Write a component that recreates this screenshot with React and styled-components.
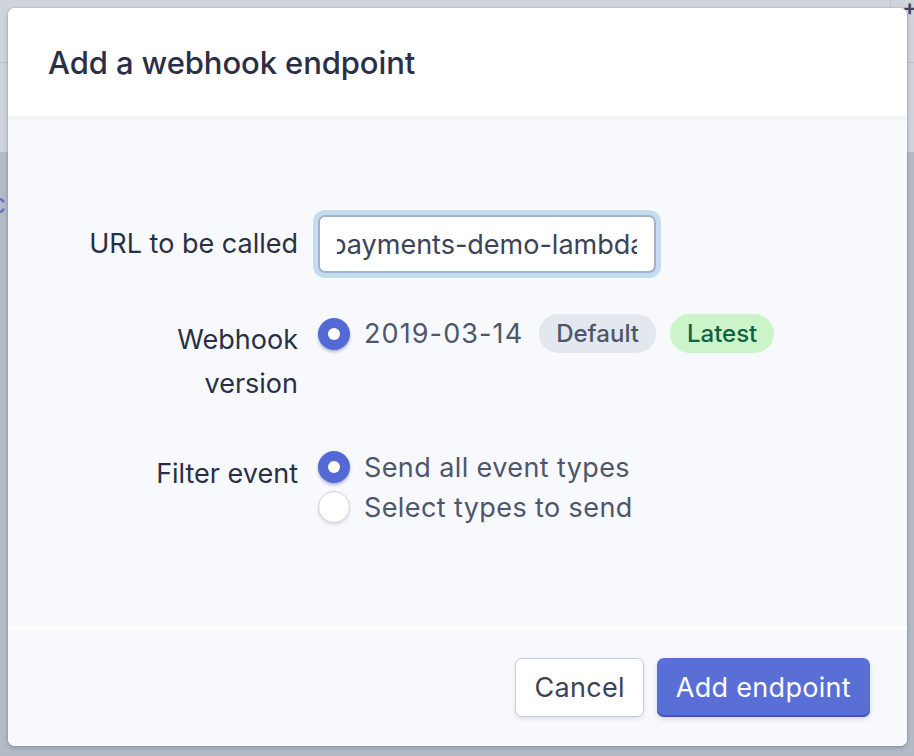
import React from "react";
import styled, { createGlobalStyle } from "styled-components";

const Global = createGlobalStyle`
  html, body { margin: 0; padding: 0; }
  body { font-family: Inter, Roboto, "Liberation Sans", Arial, sans-serif; -webkit-font-smoothing: antialiased; }
`;

const Screen = styled.div`
  position: relative;
  width: 914px;
  height: 756px;
  overflow: hidden;
  background: #b4bac6;
  display: flex;
  flex-direction: column;
`;

const TopBand = styled.div`
  height: 152px;
  background: #cfd3db;
  display: flex;
  flex-direction: column;
`;

const NavBar = styled.div`
  height: 62px;
  border-bottom: 1px solid #bec2cb;
  display: flex;
  justify-content: flex-end;
`;

const CornerButton = styled.div`
  width: 26px;
  border-left: 1px solid #bfc3cc;
  display: flex;
  justify-content: flex-end;
  color: #3f4560;
  font-size: 22px;
  font-weight: 600;
  line-height: 14px;
  margin-right: -3px;
`;

const LowerArea = styled.div`
  flex: 1;
  padding-top: 36px;
`;

const PeekLink = styled.div`
  color: #5f6fcb;
  font-size: 26px;
  text-indent: -9px;
`;

const Modal = styled.div`
  position: absolute;
  top: 8px;
  left: 8px;
  width: 899px;
  height: 738px;
  border-radius: 7px;
  overflow: hidden;
  display: flex;
  flex-direction: column;
  background: #f7f9fc;
  box-shadow: 0 2px 4px rgba(40, 48, 70, 0.25), 0 0 0 1px rgba(60, 66, 87, 0.08);
`;

const Header = styled.div`
  height: 108px;
  flex: none;
  background: #ffffff;
  display: flex;
  align-items: center;
  padding: 0 40px;
  box-sizing: border-box;
  position: relative;
  z-index: 1;
  box-shadow: 0 2px 6px rgba(60, 66, 87, 0.05);
`;

const Title = styled.h1`
  margin: 0;
  font-size: 31px;
  font-weight: 500;
  color: #2a2f45;
  letter-spacing: -0.1px;
`;

const Body = styled.div`
  flex: 1;
  background: #f7f9fc;
  padding: 99px 0 0 78px;
  display: flex;
  flex-direction: column;
  gap: 41px;
`;

const Row = styled.div`
  display: grid;
  grid-template-columns: 212px auto;
  column-gap: 20px;
  align-items: ${(p) => (p.$center ? "center" : "start")};
`;

const Label = styled.div`
  text-align: right;
  font-size: 27px;
  line-height: 44px;
  color: #2a2f45;
  padding-top: ${(p) => p.$offset || 0}px;
`;

const InputRing = styled.div`
  width: 338px;
  height: 58px;
  box-sizing: border-box;
  border: 2px solid #a0b4c8;
  border-radius: 7px;
  background: #ffffff;
  box-shadow: 0 0 0 5px #c4dcee;
  padding: 0 17px 0 17px;
  display: flex;
  align-items: center;
  overflow: hidden;
`;

const InputText = styled.div`
  flex: 1;
  overflow: hidden;
  white-space: nowrap;
  font-size: 27px;
  color: #3c4257;
  text-indent: -7px;
`;

const ControlLine = styled.div`
  display: flex;
  align-items: center;
  gap: ${(p) => p.$gap || 14}px;
  height: ${(p) => p.$h || 40}px;
`;

const OptionList = styled.div`
  display: flex;
  flex-direction: column;
`;

const Radio = styled.span`
  width: 32px;
  height: 32px;
  flex: none;
  box-sizing: border-box;
  border-radius: 50%;
  display: flex;
  align-items: center;
  justify-content: center;
  background: ${(p) => (p.$on ? "#5469d4" : "#ffffff")};
  border: ${(p) => (p.$on ? "none" : "1px solid #cfd4dc")};
  box-shadow: ${(p) =>
    p.$on
      ? "0 2px 3px rgba(50, 60, 140, 0.35)"
      : "0 2px 3px rgba(60, 66, 87, 0.15)"};
  &::after {
    content: "";
    display: ${(p) => (p.$on ? "block" : "none")};
    width: 12px;
    height: 12px;
    border-radius: 50%;
    background: #ffffff;
  }
`;

const OptionText = styled.span`
  font-size: 27px;
  letter-spacing: ${(p) => (p.$date ? 1.1 : 0.4)}px;
  color: #4f566b;
  margin-right: ${(p) => (p.$date ? 2 : 0)}px;
`;

const Badge = styled.span`
  display: inline-flex;
  align-items: center;
  height: 39px;
  padding: 0 17px;
  border-radius: 20px;
  font-size: 24px;
  font-weight: 500;
  background: ${(p) => (p.$green ? "#cbf4c9" : "#e3e8ee")};
  color: ${(p) => (p.$green ? "#0e6245" : "#4f566b")};
`;

const Footer = styled.div`
  height: 120px;
  flex: none;
  box-sizing: border-box;
  border-top: 4px solid #ffffff;
  background: #f7f9fc;
  display: flex;
  justify-content: flex-end;
  align-items: flex-start;
  gap: 13px;
  padding: 28px 37px 0 0;
`;

const Button = styled.button`
  height: 59px;
  padding: 0 ${(p) => (p.$primary ? 19 : 18)}px;
  border-radius: 7px;
  font-family: inherit;
  font-size: 27px;
  letter-spacing: 0.3px;
  cursor: pointer;
  border: ${(p) => (p.$primary ? "none" : "1px solid #c7ccd4")};
  background: ${(p) => (p.$primary ? "#5a6fd6" : "#ffffff")};
  color: ${(p) => (p.$primary ? "#ffffff" : "#3c4257")};
  box-shadow: ${(p) =>
    p.$primary
      ? "inset 0 -2px 0 #4257c0, 0 2px 5px rgba(60, 66, 87, 0.18)"
      : "0 2px 4px rgba(60, 66, 87, 0.12)"};
`;

export default function App() {
  return (
    <>
      <Global />
      <Screen>
        <TopBand>
          <NavBar>
            <CornerButton>+</CornerButton>
          </NavBar>
        </TopBand>
        <LowerArea>
          <PeekLink>c</PeekLink>
        </LowerArea>
        <Modal>
          <Header>
            <Title>Add a webhook endpoint</Title>
          </Header>
          <Body>
            <Row $center>
              <Label>URL to be called</Label>
              <InputRing>
                <InputText>payments-demo-lambda-endpoint</InputText>
              </InputRing>
            </Row>
            <Row>
              <Label $offset={4}>Webhook version</Label>
              <ControlLine $h={39} $gap={14}>
                <Radio $on />
                <OptionText $date>2019-03-14</OptionText>
                <Badge>Default</Badge>
                <Badge $green>Latest</Badge>
              </ControlLine>
            </Row>
            <Row>
              <Label $offset={5}>Filter event</Label>
              <OptionList>
                <ControlLine>
                  <Radio $on />
                  <OptionText>Send all event types</OptionText>
                </ControlLine>
                <ControlLine>
                  <Radio />
                  <OptionText>Select types to send</OptionText>
                </ControlLine>
              </OptionList>
            </Row>
          </Body>
          <Footer>
            <Button>Cancel</Button>
            <Button $primary>Add endpoint</Button>
          </Footer>
        </Modal>
      </Screen>
    </>
  );
}
